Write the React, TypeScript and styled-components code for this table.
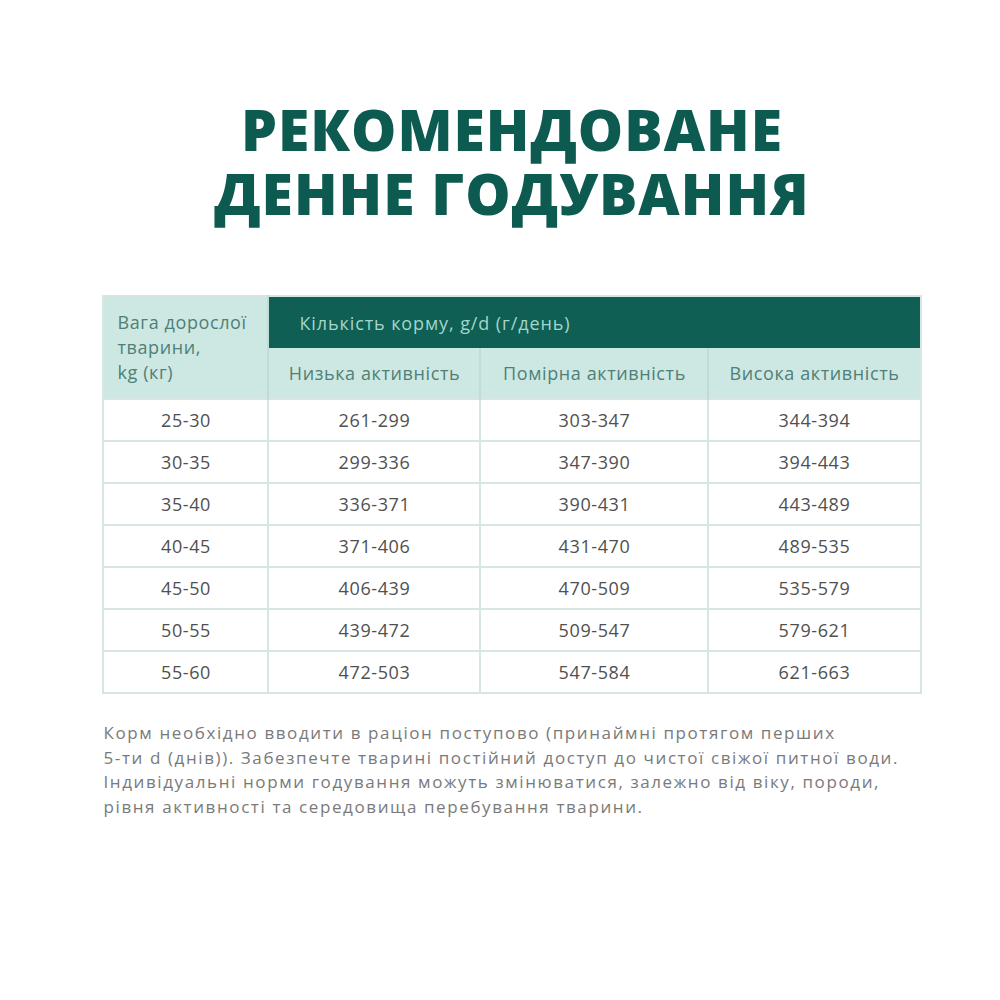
import React from "react";
import styled, { createGlobalStyle } from "styled-components";

const Global = createGlobalStyle`
  html, body { margin: 0; padding: 0; background: #ffffff; }
  body { width: 1000px; height: 1000px; overflow: hidden; }
`;

const Page = styled.div`
  width: 1000px;
  height: 1000px;
  box-sizing: border-box;
  padding: 97px 0 0 24px;
  display: flex;
  flex-direction: column;
  align-items: center;
  font-family: "Open Sans", "Noto Sans", sans-serif;
`;

const Title = styled.h1`
  margin: 0;
  font-family: "Open Sans", "Noto Sans", sans-serif;
  font-weight: 800;
  font-size: 57px;
  line-height: 64px;
  color: #0d5a50;
  text-align: center;
  letter-spacing: 1px;
`;

const Table = styled.table`
  margin-top: 70px;
  width: 817px;
  table-layout: fixed;
  border-collapse: collapse;
  border: 2px solid #d6e6e2;
  font-size: 18px;
  letter-spacing: 0.6px;
  color: #505050;
`;

const Col = styled.col<{ $w: number }>`
  width: ${(p) => p.$w}px;
`;

const WeightHead = styled.th`
  background: #cde8e2;
  color: #4f7f76;
  font-weight: 400;
  text-align: left;
  vertical-align: middle;
  padding: 0 4px 0 13px;
  line-height: 25px;
  border-right: 2px solid #c0dcd6;
  white-space: nowrap;
`;

const GroupHead = styled.th`
  height: 51px;
  background: #0f5f55;
  color: #a3d6ca;
  font-weight: 400;
  text-align: left;
  padding: 0 0 0 30px;
  letter-spacing: 0.9px;
`;

const SubHead = styled.th<{ $first?: boolean }>`
  height: 50px;
  background: #cde8e2;
  color: #4f7f76;
  font-weight: 400;
  text-align: center;
  padding: 0;
  white-space: nowrap;
  border-left: ${(p) => (p.$first ? "none" : "2px solid #bfdcd5")};
`;

const Cell = styled.td`
  height: 40px;
  padding: 0;
  text-align: center;
  border: 2px solid #d6e6e2;
`;

const Note = styled.p`
  margin: 27px 0 0 0;
  width: 817px;
  font-size: 17px;
  letter-spacing: 1.6px;
  line-height: 24.5px;
  color: #7a7a7a;
  white-space: nowrap;
`;

const rows = [
  ["25-30", "261-299", "303-347", "344-394"],
  ["30-35", "299-336", "347-390", "394-443"],
  ["35-40", "336-371", "390-431", "443-489"],
  ["40-45", "371-406", "431-470", "489-535"],
  ["45-50", "406-439", "470-509", "535-579"],
  ["50-55", "439-472", "509-547", "579-621"],
  ["55-60", "472-503", "547-584", "621-663"],
];

export default function App() {
  return (
    <>
      <Global />
      <Page>
        <Title>
          РЕКОМЕНДОВАНЕ
          <br />
          ДЕННЕ ГОДУВАННЯ
        </Title>
        <Table>
          <colgroup>
            <Col $w={165} />
            <Col $w={212} />
            <Col $w={228} />
            <Col $w={212} />
          </colgroup>
          <thead>
            <tr>
              <WeightHead rowSpan={2}>
                Вага дорослої
                <br />
                тварини,
                <br />
                kg (кг)
              </WeightHead>
              <GroupHead colSpan={3}>Кількість корму, g/d (г/день)</GroupHead>
            </tr>
            <tr>
              <SubHead $first>Низька активність</SubHead>
              <SubHead>Помірна активність</SubHead>
              <SubHead>Висока активність</SubHead>
            </tr>
          </thead>
          <tbody>
            {rows.map((r) => (
              <tr key={r[0]}>
                {r.map((c, i) => (
                  <Cell key={i}>{c}</Cell>
                ))}
              </tr>
            ))}
          </tbody>
        </Table>
        <Note>
          Корм необхідно вводити в раціон поступово (принаймні протягом перших
          <br />
          5-ти d (днів)). Забезпечте тварині постійний доступ до чистої свіжої питної води.
          <br />
          Індивідуальні норми годування можуть змінюватися, залежно від віку, породи,
          <br />
          рівня активності та середовища перебування тварини.
        </Note>
      </Page>
    </>
  );
}
